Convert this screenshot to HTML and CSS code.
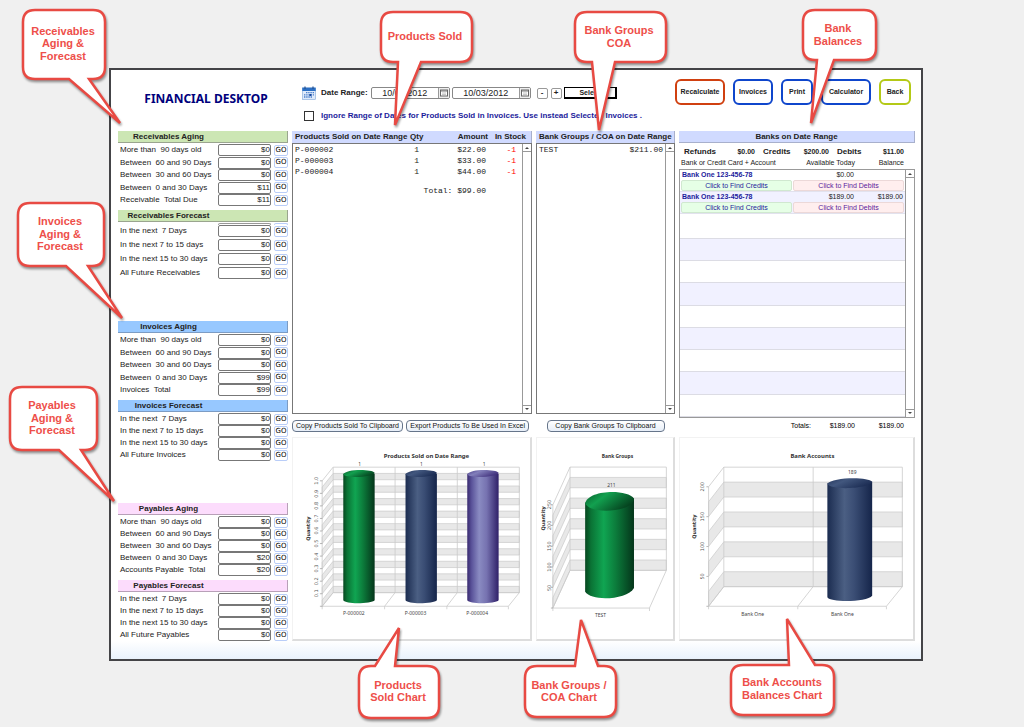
FILE: index.html
```html
<!DOCTYPE html>
<html lang="en">
<head>
<meta charset="utf-8">
<title>Financial Desktop</title>
<link rel="stylesheet" href="styles.css">
</head>
<body>
<main class="window">
  <header class="top">
    <h1 class="title">FINANCIAL DESKTOP</h1>
    <div class="filters">
      <div class="filter-row">
        <svg class="cal-icon" viewBox="0 0 14 14" aria-hidden="true">
          <rect x="0.5" y="2" width="13" height="11.5" fill="#dfeafa" stroke="#7fa5d8" stroke-width="0.6"/>
          <rect x="0.3" y="1.6" width="13.4" height="3.4" fill="#2b6fc4"/>
          <path d="M3 0.4v2.6M11 0.4v2.6" stroke="#27508c" stroke-width="1.2"/>
          <path d="M4 6.6h8M2 8.8h10M2 11h8" stroke="#4a7fcb" stroke-width="1.3" stroke-dasharray="1.4 0.8"/>
          <rect x="7.4" y="8" width="2" height="2" fill="#1747a0"/>
        </svg>
        <label class="strong" for="from">Date Range:</label>
        <span class="date"><input id="from" type="text" value="10/03/2012"><button type="button" aria-label="Pick start date"><svg viewBox="0 0 8 8"><rect x="0.5" y="1" width="7" height="6" fill="#fff" stroke="#666"/><path d="M1 2h6" stroke="#777"/><path d="M2 4h4M2 5.6h4" stroke="#aaa" stroke-width="0.7"/></svg></button></span>
        <span class="date second"><input type="text" aria-label="End date" value="10/03/2012"><button type="button" aria-label="Pick end date"><svg viewBox="0 0 8 8"><rect x="0.5" y="1" width="7" height="6" fill="#fff" stroke="#666"/><path d="M1 2h6" stroke="#777"/><path d="M2 4h4M2 5.6h4" stroke="#aaa" stroke-width="0.7"/></svg></button></span>
        <button class="step first" type="button">-</button>
        <button class="step" type="button">+</button>
        <button class="select" type="button">Select</button>
      </div>
      <div class="filter-row">
        <input class="tick" id="ignore" type="checkbox">
        <label class="strong blue" for="ignore">Ignore Range of Dates for Products Sold in Invoices. Use instead Selected Invoices .</label>
      </div>
    </div>
    <nav class="actions">
      <button class="act red" type="button">Recalculate</button>
      <button class="act" type="button">Invoices</button>
      <button class="act" type="button">Print</button>
      <button class="act" type="button">Calculator</button>
      <button class="act lime" type="button">Back</button>
    </nav>
  </header>

  <div class="board">
    <aside class="side">
      <section class="group green">
        <h2 class="bar">Receivables Aging</h2>
        <div class="rows five">
          <div class="row"><label for="r1">More than&nbsp; 90 days old</label><input id="r1" value="$0"><button type="button">GO</button></div>
          <div class="row"><label for="r2">Between&nbsp; 60 and 90 Days</label><input id="r2" value="$0"><button type="button">GO</button></div>
          <div class="row"><label for="r3">Between&nbsp; 30 and 60 Days</label><input id="r3" value="$0"><button type="button">GO</button></div>
          <div class="row"><label for="r4">Between&nbsp; 0 and 30 Days</label><input id="r4" value="$11"><button type="button">GO</button></div>
          <div class="row"><label for="r5">Receivable&nbsp; Total Due</label><input id="r5" value="$11"><button type="button">GO</button></div>
        </div>
        <h2 class="bar">Receivables Forecast</h2>
        <div class="sliver"><i></i><i></i></div>
        <div class="rows four tall">
          <div class="row"><label for="r6">In the next&nbsp; 7 Days</label><input id="r6" value="$0"><button type="button">GO</button></div>
          <div class="row"><label for="r7">In the next 7 to 15 days</label><input id="r7" value="$0"><button type="button">GO</button></div>
          <div class="row"><label for="r8">In the next 15 to 30 days</label><input id="r8" value="$0"><button type="button">GO</button></div>
          <div class="row"><label for="r9">All Future Receivables</label><input id="r9" value="$0"><button type="button">GO</button></div>
        </div>
      </section>
      <section class="group sky">
        <h2 class="bar">Invoices Aging</h2>
        <div class="rows five">
          <div class="row"><label for="i1">More than&nbsp; 90 days old</label><input id="i1" value="$0"><button type="button">GO</button></div>
          <div class="row"><label for="i2">Between&nbsp; 60 and 90 Days</label><input id="i2" value="$0"><button type="button">GO</button></div>
          <div class="row"><label for="i3">Between&nbsp; 30 and 60 Days</label><input id="i3" value="$0"><button type="button">GO</button></div>
          <div class="row"><label for="i4">Between&nbsp; 0 and 30 Days</label><input id="i4" value="$99"><button type="button">GO</button></div>
          <div class="row"><label for="i5">Invoices&nbsp; Total</label><input id="i5" value="$99"><button type="button">GO</button></div>
        </div>
        <h2 class="bar">Invoices Forecast</h2>
        <div class="rows four">
          <div class="row"><label for="i6">In the next&nbsp; 7 Days</label><input id="i6" value="$0"><button type="button">GO</button></div>
          <div class="row"><label for="i7">In the next 7 to 15 days</label><input id="i7" value="$0"><button type="button">GO</button></div>
          <div class="row"><label for="i8">In the next 15 to 30 days</label><input id="i8" value="$0"><button type="button">GO</button></div>
          <div class="row"><label for="i9">All Future Invoices</label><input id="i9" value="$0"><button type="button">GO</button></div>
        </div>
      </section>
      <section class="group pink">
        <h2 class="bar">Payables Aging</h2>
        <div class="rows">
          <div class="row"><label for="p1">More than&nbsp; 90 days old</label><input id="p1" value="$0"><button type="button">GO</button></div>
          <div class="row"><label for="p2">Between&nbsp; 60 and 90 Days</label><input id="p2" value="$0"><button type="button">GO</button></div>
          <div class="row"><label for="p3">Between&nbsp; 30 and 60 Days</label><input id="p3" value="$0"><button type="button">GO</button></div>
          <div class="row"><label for="p4">Between&nbsp; 0 and 30 Days</label><input id="p4" value="$20"><button type="button">GO</button></div>
          <div class="row"><label for="p5">Accounts Payable&nbsp; Total</label><input id="p5" value="$20"><button type="button">GO</button></div>
        </div>
        <h2 class="bar">Payables Forecast</h2>
        <div class="rows four">
          <div class="row"><label for="p6">In the next&nbsp; 7 Days</label><input id="p6" value="$0"><button type="button">GO</button></div>
          <div class="row"><label for="p7">In the next 7 to 15 days</label><input id="p7" value="$0"><button type="button">GO</button></div>
          <div class="row"><label for="p8">In the next 15 to 30 days</label><input id="p8" value="$0"><button type="button">GO</button></div>
          <div class="row"><label for="p9">All Future Payables</label><input id="p9" value="$0"><button type="button">GO</button></div>
        </div>
      </section>
    </aside>

    <section class="panel">
      <div class="head products"><span>Products Sold on Date Range</span><span>Qty</span><span class="num">Amount</span><span class="num">In Stock</span></div>
      <div class="list">
        <table class="mono">
          <colgroup><col class="c-name"><col class="c-qty"><col class="c-amt"><col class="c-stock"></colgroup>
          <tbody>
            <tr><td>P-000002</td><td>1</td><td>$22.00</td><td class="neg">-1</td></tr>
            <tr><td>P-000003</td><td>1</td><td>$33.00</td><td class="neg">-1</td></tr>
            <tr><td>P-000004</td><td>1</td><td>$44.00</td><td class="neg">-1</td></tr>
            <tr class="sum"><td colspan="3">Total: $99.00</td><td></td></tr>
          </tbody>
        </table>
        <div class="scroll"><button type="button" aria-label="Scroll up"><i class="up"></i></button><button type="button" aria-label="Scroll down"><i class="down"></i></button></div>
      </div>
      <div class="tools">
        <button class="pill" type="button">Copy Products Sold To Clipboard</button>
        <button class="pill" type="button">Export Products To Be Used In Excel</button>
      </div>
    </section>

    <section class="panel">
      <div class="head"><span>Bank Groups / COA on Date Range</span></div>
      <div class="list">
        <table class="mono"><tbody><tr><td>TEST</td><td class="num">$211.00</td></tr></tbody></table>
        <div class="scroll"><button type="button" aria-label="Scroll up"><i class="up"></i></button><button type="button" aria-label="Scroll down"><i class="down"></i></button></div>
      </div>
      <div class="tools center"><button class="pill wide" type="button">Copy Bank Groups To Clipboard</button></div>
    </section>

    <section class="panel">
      <div class="head mid"><span>Banks on Date Range</span></div>
      <div class="totals-line"><b>Refunds</b><span>$0.00</span><b>Credits</b><span>$200.00</span><b>Debits</b><span>$11.00</span></div>
      <div class="cols bank-head"><span>Bank or Credit Card + Account</span><span>Available Today</span><span>Balance</span></div>
      <div class="list banks">
        <div class="bank-rows">
          <div class="bank">
            <div class="cols"><b>Bank One 123-456-78</b><span>$0.00</span><span></span></div>
            <div class="finds"><button class="credit" type="button">Click to Find Credits</button><button class="debit" type="button">Click to Find Debits</button></div>
          </div>
          <div class="bank tint">
            <div class="cols"><b>Bank One 123-456-78</b><span>$189.00</span><span>$189.00</span></div>
            <div class="finds"><button class="credit" type="button">Click to Find Credits</button><button class="debit" type="button">Click to Find Debits</button></div>
          </div>
          <div class="blank first"></div><div class="blank tint"></div><div class="blank"></div><div class="blank tint"></div><div class="blank"></div><div class="blank tint"></div><div class="blank"></div><div class="blank tint"></div><div class="blank"></div>
        </div>
        <div class="scroll"><button type="button" aria-label="Scroll up"><i class="up"></i></button><button type="button" aria-label="Scroll down"><i class="down"></i></button></div>
      </div>
      <div class="cols grand"><span>Totals:</span><span>$189.00</span><span>$189.00</span></div>
    </section>

    <figure class="chart">
      <svg viewBox="292 437 238 202" role="img" aria-label="Products Sold on Date Range chart">
        <defs>
          <linearGradient id="gGreen"><stop offset="0" stop-color="#06461f"/><stop offset=".12" stop-color="#0a7335"/><stop offset=".38" stop-color="#10a552"/><stop offset=".62" stop-color="#0c7d3c"/><stop offset="1" stop-color="#04351a"/></linearGradient>
          <linearGradient id="gBlue"><stop offset="0" stop-color="#1b2c50"/><stop offset=".38" stop-color="#4b5f83"/><stop offset=".6" stop-color="#3a4d74"/><stop offset="1" stop-color="#15254a"/></linearGradient>
          <linearGradient id="gViolet"><stop offset="0" stop-color="#392a70"/><stop offset=".14" stop-color="#5a539a"/><stop offset=".38" stop-color="#8a8bc2"/><stop offset=".62" stop-color="#7672b0"/><stop offset="1" stop-color="#2f2068"/></linearGradient>
          <linearGradient id="tGreen" x2="1" y2=".5"><stop offset="0" stop-color="#085c2a"/><stop offset=".4" stop-color="#12a04f"/><stop offset="1" stop-color="#05431f"/></linearGradient>
          <linearGradient id="tBlue" x2="1" y2=".5"><stop offset="0" stop-color="#22355c"/><stop offset=".4" stop-color="#42577e"/><stop offset="1" stop-color="#1c2d54"/></linearGradient>
          <linearGradient id="tViolet" x2="1" y2=".5"><stop offset="0" stop-color="#463a86"/><stop offset=".4" stop-color="#8380bb"/><stop offset="1" stop-color="#40307c"/></linearGradient>
          <path id="band1" d="M321.3 486.3L332.3 472.6H519.3v6.3H332.3l-11 13.7z"/>
        </defs>
        <g class="band">
          <use href="#band1"/><use href="#band1" y="12.6"/><use href="#band1" y="25.2"/><use href="#band1" y="37.8"/><use href="#band1" y="50.4"/><use href="#band1" y="63"/><use href="#band1" y="75.6"/><use href="#band1" y="88.2"/><use href="#band1" y="100.8"/><use href="#band1" y="113.4"/>
        </g>
        <path class="frame" d="M321.3 480L332.3 466.3H519.3V592.3H332.3V466.3M321.3 480V606H508.3L519.3 592.3M321.3 606L332.3 592.3M384 606L394.5 592.3V466.3M446.5 606L457 592.3V466.3M321.3 606v3M384 606v3M446.5 606v3M508.3 606v3"/>
        <path class="tick-line" d="M319 480h2.5M319 492.6h2.5M319 505.2h2.5M319 517.8h2.5M319 530.4h2.5M319 543h2.5M319 555.6h2.5M319 568.2h2.5M319 580.8h2.5M319 593.4h2.5M319 606h2.5"/>
        <g fill="url(#gGreen)"><path d="M342.5 473V600C345 604.5 371 603.5 374 600V473z"/><path fill="url(#tGreen)" d="M342.5 473.5C345 468 371 468 374 472C373 476.5 345 478 342.5 473.5z"/></g>
        <g fill="url(#gBlue)"><path d="M405 473V600C407.5 604.5 433.5 603.5 436.5 600V473z"/><path fill="url(#tBlue)" d="M405 473.5C407.5 468 433.5 468 436.5 472C435.5 476.5 407.5 478 405 473.5z"/></g>
        <g fill="url(#gViolet)"><path d="M467 473V600C469.5 604.5 495.5 603.5 498.5 600V473z"/><path fill="url(#tViolet)" d="M467 473.5C469.5 468 495.5 468 498.5 472C497.5 476.5 469.5 478 467 473.5z"/></g>
        <text class="c-title" x="426" y="457">Products Sold on Date Range</text>
        <g class="c-small"><text x="359" y="465">1</text><text x="421" y="465">1</text><text x="484" y="465">1</text>
        <text x="353" y="615">P-000002</text><text x="415" y="615">P-000003</text><text x="477" y="615">P-000004</text></g>
        <g class="c-axis"><text transform="translate(317 480) rotate(-90)">1.0</text><text transform="translate(317 493) rotate(-90)">0.9</text><text transform="translate(317 505) rotate(-90)">0.8</text><text transform="translate(317 518) rotate(-90)">0.7</text><text transform="translate(317 530) rotate(-90)">0.6</text><text transform="translate(317 543) rotate(-90)">0.5</text><text transform="translate(317 556) rotate(-90)">0.4</text><text transform="translate(317 568) rotate(-90)">0.3</text><text transform="translate(317 581) rotate(-90)">0.2</text><text transform="translate(317 593) rotate(-90)">0.1</text></g>
        <text class="c-name-axis" transform="translate(309 528) rotate(-90)">Quantity</text>
      </svg>
    </figure>

    <figure class="chart">
      <svg viewBox="537 437 137 202" role="img" aria-label="Bank Groups chart">
        <defs><path id="band2" d="M553 514.7L570.3 476.7H667.3v10.4H570.3L553 525.1z"/></defs>
        <g class="band"><use href="#band2"/><use href="#band2" y="20.8"/><use href="#band2" y="41.6"/><use href="#band2" y="62.4"/><use href="#band2" y="83.2"/></g>
        <path class="frame" d="M553 504.3L570.3 466.3H667.3V570.3H570.3V466.3M553 504.3V608.3H650.3L667.3 570.3M553 608.3L570.3 570.3M553 608.3v3M650.3 608.3v3"/>
        <path class="tick-line" d="M551 504.3h2M551 525h2M551 546h2M551 567h2M551 587.5h2M551 608.3h2"/>
        <path fill="url(#gGreen)" d="M585.5 502V592C592 602 628 600 634.7 588V498z"/>
        <path fill="url(#tGreen)" d="M585.5 503C588 489 628 488 634.7 498C635 511 592 515 585.5 503z"/>
        <text class="c-title narrow" x="618" y="457">Bank Groups</text>
        <g class="c-small"><text x="612" y="486">211</text><text x="601" y="617">TEST</text></g>
        <g class="c-axis"><text transform="translate(551 504) rotate(-90)">250</text><text transform="translate(551 525) rotate(-90)">200</text><text transform="translate(551 546) rotate(-90)">150</text><text transform="translate(551 567) rotate(-90)">100</text><text transform="translate(551 588) rotate(-90)">50</text></g>
        <text class="c-name-axis" transform="translate(545 518) rotate(-90)">Quantity</text>
      </svg>
    </figure>

    <figure class="chart">
      <svg viewBox="679 437 234 202" role="img" aria-label="Bank Accounts chart">
        <defs><path id="band3" d="M707.7 501L723 481.3H902.3v15H723L707.7 516z"/></defs>
        <g class="band"><use href="#band3"/><use href="#band3" y="30"/><use href="#band3" y="60"/><use href="#band3" y="90"/></g>
        <path class="frame" d="M707.7 486L723 466.3H902.3V586.3H723V466.3M707.7 486V606H886.3L902.3 586.3M707.7 606L723 586.3M797.3 606L812.7 586.3V466.3M707.7 606v3M797.3 606v3M886.3 606v3"/>
        <path class="tick-line" d="M705.5 486h2M705.5 516h2M705.5 546h2M705.5 576h2M705.5 606h2"/>
        <path fill="url(#gBlue)" d="M827 482.5V597C830 602.5 867 602 872 595.5V481z"/>
        <path fill="url(#tBlue)" d="M827 483C831 476.5 868 475.5 872 481C870 488 830 490 827 483z"/>
        <text class="c-title" x="812" y="457">Bank Accounts</text>
        <g class="c-small"><text x="852" y="473">189</text><text x="752" y="616">Bank One</text><text x="842" y="616">Bank One</text></g>
        <g class="c-axis"><text transform="translate(703 486) rotate(-90)">200</text><text transform="translate(703 516) rotate(-90)">150</text><text transform="translate(703 546) rotate(-90)">100</text><text transform="translate(703 576) rotate(-90)">50</text></g>
        <text class="c-name-axis" transform="translate(695 526) rotate(-90)">Quantity</text>
      </svg>
    </figure>
  </div>
</main>

<svg class="callouts" viewBox="0 0 1024 727" width="1024" height="727">
  <g class="bubble">
    <path d="M35 10H93Q105 10 105 22V67Q105 79 93 79H89L120 123L69 79H35Q23 79 23 67V22Q23 10 35 10z"/>
    <path d="M30 203H92Q104 203 104 215V254Q104 266 92 266H88L122 318L66 266H30Q18 266 18 254V215Q18 203 30 203z"/>
    <path d="M22 387H85Q97 387 97 399V438Q97 450 85 450H81L114 501L59 450H22Q10 450 10 438V399Q10 387 22 387z"/>
    <path d="M393 12H460Q472 12 472 24V50Q472 62 460 62H421L395 125L398 62H393Q381 62 381 50V24Q381 12 393 12z"/>
    <path d="M587 12H654Q666 12 666 24V50Q666 62 654 62H615L599 130L592 62H587Q575 62 575 50V24Q575 12 587 12z"/>
    <path d="M815 10H864Q876 10 876 22V48Q876 60 864 60H834L811 123L817 60H815Q803 60 803 48V22Q803 10 815 10z"/>
    <path d="M371 666H375L399 628L395 666H427Q439 666 439 678V706Q439 718 427 718H371Q359 718 359 706V678Q359 666 371 666z"/>
    <path d="M537 666H575L581 620L598 666H604Q616 666 616 678V705Q616 717 604 717H537Q525 717 525 705V678Q525 666 537 666z"/>
    <path d="M743 665H789L787 619L815 665H822Q834 665 834 677V703Q834 715 822 715H743Q731 715 731 703V677Q731 665 743 665z"/>
  </g>
  <g class="note">
    <text x="63" y="35">Receivables</text><text x="63" y="47">Aging &amp;</text><text x="63" y="60">Forecast</text>
    <text x="60" y="225">Invoices</text><text x="60" y="238">Aging &amp;</text><text x="60" y="250">Forecast</text>
    <text x="52" y="409">Payables</text><text x="52" y="422">Aging &amp;</text><text x="52" y="434">Forecast</text>
    <text x="425" y="40">Products Sold</text>
    <text x="619" y="34">Bank Groups</text><text x="619" y="47">COA</text>
    <text x="838" y="32">Bank</text><text x="838" y="45">Balances</text>
    <text x="398" y="689">Products</text><text x="398" y="701">Sold Chart</text>
    <text x="569" y="689">Bank Groups /</text><text x="569" y="701">COA Chart</text>
    <text x="782" y="686">Bank Accounts</text><text x="782" y="699">Balances Chart</text>
  </g>
</svg>
</body>
</html>
```

FILE: styles.css
```css
* { box-sizing: border-box; }
body {
  margin: 0;
  padding: 68px 101px 66px 109px;
  position: relative;
  background: #f0f0f0;
  color: #222;
  font: 8px/10px "Liberation Sans", Arial, sans-serif;
}
h1, h2, figure { margin: 0; }
button, input { font: inherit; color: inherit; margin: 0; padding: 0; min-width: 0; }
button { background: #fff; border: 1px solid #999; white-space: nowrap; }
.window {
  border: 2px solid #444447;
  background: linear-gradient(to top, #e9f2fc 0, #fff 18px);
  padding: 0 6px 18px 7px;
}

/* header */
.top { display: flex; min-height: 61px; }
.title {
  width: 176px;
  padding-top: 20px;
  text-align: center;
  font: bold 12px/18px "Noto Sans", sans-serif;
  color: #00007c;
  white-space: nowrap;
}
.filters { flex: 1; min-width: 0; padding: 16px 0 0 8px; display: flex; flex-direction: column; gap: 9px; }
.filter-row { display: flex; align-items: center; height: 14px; white-space: nowrap; }
.cal-icon { width: 14px; height: 14px; margin-right: 5px; }
.strong { font-weight: bold; }
.blue { color: #1c1c9c; margin-left: 7px; }
.date { display: flex; width: 79px; height: 12px; margin-left: 3px; border: 1px solid #888; border-radius: 2px; }
.date.second { margin-left: 2px; }
.date input { flex: 1; width: 0; border: 0; background: none; text-align: center; font-size: 9px; }
.date button { width: 11px; border: 0; border-left: 1px solid #999; background: #eee; display: grid; place-items: center; }
.date svg { width: 8px; height: 8px; display: block; }
.step { width: 11px; height: 11px; margin-left: 3px; border-radius: 2px; font-weight: bold; line-height: 8px; }
.step.first { margin-left: 6px; }
.select { width: 53px; height: 12px; margin-left: 2px; border: 1px solid #000; border-width: 1px 2px 2px 1px; font: bold 7px/8px "Liberation Sans", sans-serif; }
.tick { appearance: none; width: 10px; height: 10px; margin-left: 2px; border: 1px solid #333; background: #fff; }
.actions { display: flex; gap: 8px; padding: 9px 4px 0 0; }
.act { height: 26px; padding: 0 3px; border: 2px solid #0f46cc; border-radius: 6px; font: bold 7px/10px "Liberation Sans", sans-serif; min-width: 32px; }
.act:nth-child(1), .act:nth-child(4) { min-width: 50px; }
.act:nth-child(2) { min-width: 40px; }
.red { border-color: #d04010; }
.lime { border-color: #b4c916; }

/* main grid */
.board {
  display: grid;
  grid-template-columns: minmax(0, 170fr) minmax(0, 240fr) minmax(0, 139fr) minmax(0, 236fr);
  grid-template-rows: 1fr auto;
  column-gap: 4px;
}
.side { grid-row: 1 / 3; display: flex; flex-direction: column; gap: 42px; }
.bar {
  height: 12px;
  margin-bottom: 1px;
  padding-right: 68px;
  font: bold 8px/11px "Liberation Sans", sans-serif;
  text-align: center;
  border: solid #9aa58f;
  border-width: 0 1px 1px 0;
}
.rows + .bar { margin-top: 4px; }
.green .bar { background: #cce6b4; }
.sky .bar { background: #97c8ff; border-color: #7c9cc4; }
.pink .bar { background: #fcdcfc; border-color: #b8a0b8; }
.rows { display: flex; flex-direction: column; justify-content: space-between; }
.five { min-height: 62px; }
.tall { min-height: 54px; }
.row { display: grid; grid-template-columns: 1fr 53px 14px; column-gap: 3px; align-items: center; height: 12px; padding-left: 2px; }
.row label { white-space: nowrap; }
.row input { width: 100%; height: 12px; padding-bottom: 1px; text-align: right; border: 1px solid #777; border-radius: 2px; background: #fff; }
.row button { height: 11px; border: 1px solid #b9cdf8; border-radius: 2px; font: 7px/9px "DejaVu Sans", sans-serif; color: #000; }
.sliver { display: grid; grid-template-columns: 1fr 53px 14px; column-gap: 3px; height: 2px; }
.sliver i { grid-column: 2; border: 1px solid #999; border-bottom: 0; border-radius: 2px 2px 0 0; }
.sliver i + i { grid-column: 3; border-color: #b9cdf8; }

/* panels */
.panel { display: flex; flex-direction: column; min-width: 0; }
.head { height: 12px; padding: 0 3px; background: #d0daff; font: bold 8px/12px "Liberation Sans", sans-serif; white-space: nowrap; border-right: 1px solid #a8b0cc; }
.mid { text-align: center; border-bottom: 1px solid #a8b0cc; }
.num { text-align: right; }
.products { display: grid; grid-template-columns: 115px 1fr 43px 38px; padding-right: 5px; }
.list { flex: 1; display: flex; border: 1px solid #777; background: #fff; min-height: 0; }
.mono { flex: 1; align-self: flex-start; border-collapse: collapse; table-layout: fixed; font: 8px/11px "Liberation Mono", monospace; }
.mono td { padding: 0 2px; }
.mono td + td { text-align: right; }
.c-name { width: 110px; }
.c-qty { width: 18px; }
.c-stock { width: 34px; }
.mono .neg { color: #f00; padding-right: 6px; }
.mono .sum td { text-align: right; padding-top: 8px; }
.scroll { width: 9px; border-left: 1px solid #999; display: flex; flex-direction: column; justify-content: space-between; }
.scroll button { width: 8px; height: 8px; border: 0; border-bottom: 1px solid #999; display: grid; place-items: center; }
.scroll button + button { border-bottom: 0; border-top: 1px solid #999; }
.up, .down { border: 2px solid transparent; }
.up { border-top: 0; border-bottom-color: #444; }
.down { border-bottom: 0; border-top-color: #444; }
.tools { display: flex; justify-content: space-between; height: 23px; padding: 6px 3px 5px 0; }
.center { justify-content: center; padding-right: 0; }
.pill { padding: 0 3px; border: 1px solid #66758a; border-radius: 4px; background: linear-gradient(#fff, #e6eef8); font: 7px/10px "Liberation Sans", sans-serif; color: #111; }
.wide { width: 118px; }

.totals-line { display: grid; grid-template-columns: 39px 32px 35px 39px 34px 1fr; padding: 2px 11px 0 5px; line-height: 10px; align-items: center; height: 15px; }
.totals-line span { font: bold 7px/10px "Liberation Sans", sans-serif; text-align: right; }
.totals-line b:nth-child(n+3) { padding-left: 8px; }
.cols { display: grid; grid-template-columns: 1fr 54px 49px; font: 7px/10px "Liberation Sans", sans-serif; white-space: nowrap; padding: 0 2px; }
.cols span + span, .cols b + span { text-align: right; }
.cols b { color: #1c1c9c; }
.bank-head { height: 11px; padding-right: 11px; }
.banks { border-color: #999; }
.bank-rows { flex: 1; display: flex; flex-direction: column; }
.bank { height: 22px; border-bottom: 1px solid #e2e2ee; }
.tint { background: #f1f1ff; }
.finds { display: grid; grid-template-columns: 1fr 1fr; padding: 0 1px; gap: 1px; }
.finds button { height: 11px; border-radius: 2px; font: 7px/9px "Liberation Sans", sans-serif; color: #1c1c9c; }
.finds .credit { background: #e6ffe6; border-color: #d0e8d0; }
.finds .debit { background: #ffeeee; border-color: #ecd8d8; color: #5a1a9c; }
.blank { flex: 1; border-bottom: 1px solid #dcdce4; }
.blank.first { flex: 0 0 25px; }
.grand { height: 19px; padding: 3px 11px 0 2px; grid-template-columns: 1fr 44px 49px; color: #000; }
.grand span { text-align: right; }

/* charts */
.chart { border: solid #ddd; border-width: 1px 2px 2px 1px; border-top-color: #f2f2f2; border-left-color: #f2f2f2; background: #fff; }
.chart svg { display: block; width: 100%; height: auto; }
.band { fill: #e8e8e8; stroke: #cacaca; stroke-width: 0.7; }
.frame { fill: none; stroke: #cacaca; stroke-width: 0.8; }
.tick-line { stroke: #999; stroke-width: 0.7; }
.c-title { font: bold 6px "Noto Sans", sans-serif; fill: #333; text-anchor: middle; }
.narrow { font-size: 5px; }
.c-small { font: 5px "Noto Sans", sans-serif; fill: #444; text-anchor: middle; }
.c-axis { font: 5px "DejaVu Sans", sans-serif; fill: #555; text-anchor: middle; }
.c-name-axis { font: bold 5px "DejaVu Sans", sans-serif; fill: #333; text-anchor: middle; }

/* annotation bubbles over the page */
.callouts { position: absolute; left: 0; top: 0; pointer-events: none; }
.bubble { fill: #fff; stroke: #e84a43; stroke-width: 2.5; filter: drop-shadow(1px 2px 1px rgba(0, 0, 0, 0.4)); }
.note { font: bold 11px "Liberation Sans", Arial, sans-serif; fill: #ee4f4a; text-anchor: middle; }
```
